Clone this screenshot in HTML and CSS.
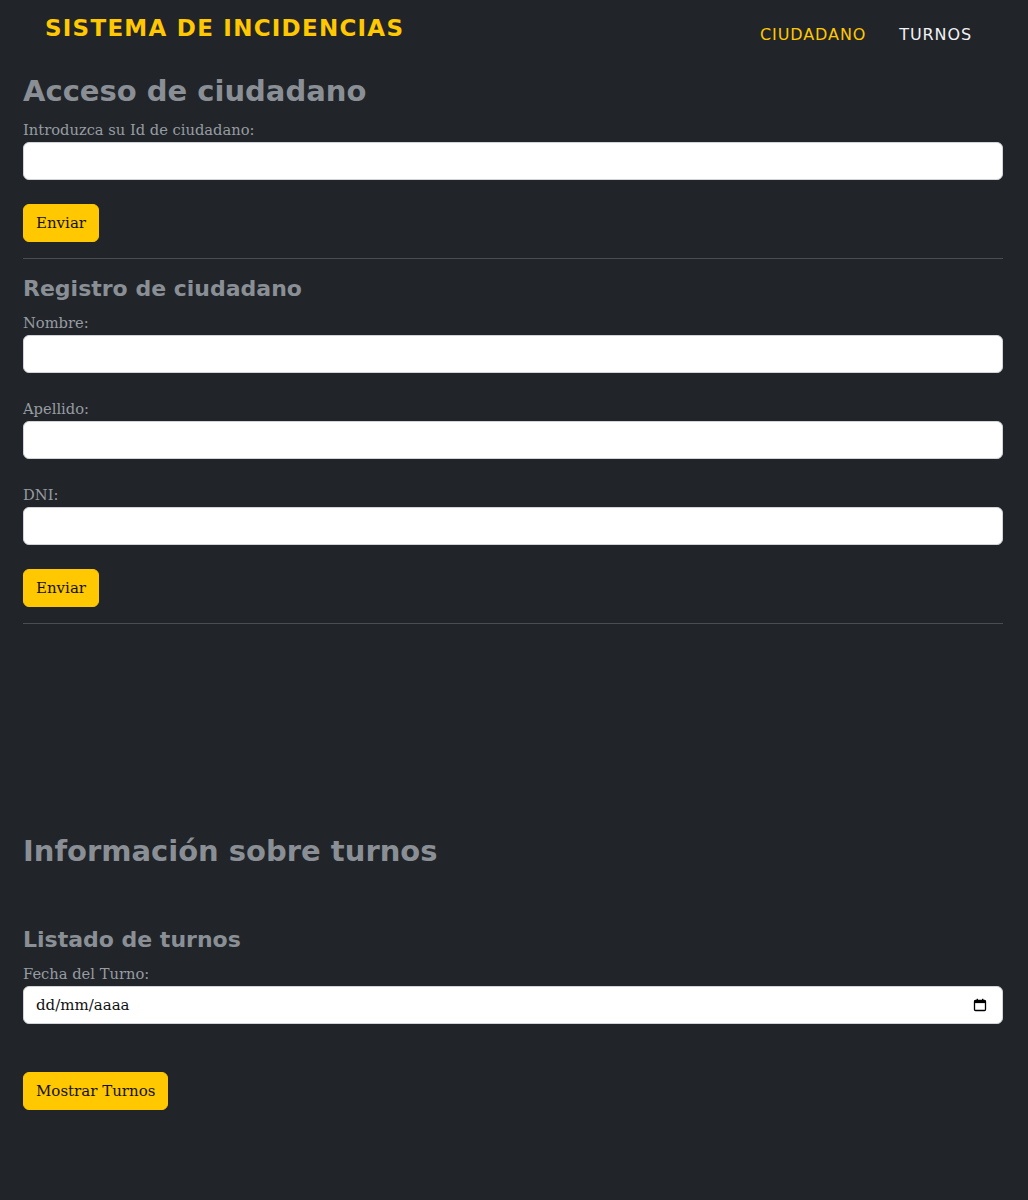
FILE: index.html
```html
<!DOCTYPE html>
<html lang="es">
<head>
<meta charset="utf-8">
<title>Sistema de incidencias</title>
<link rel="stylesheet" href="styles.css">
</head>
<body>
<header class="navbar">
  <div class="brand">SISTEMA DE INCIDENCIAS</div>
  <nav class="nav">
    <a class="nav-link active" href="#">CIUDADANO</a>
    <a class="nav-link" href="#">TURNOS</a>
  </nav>
</header>
<main class="container">
  <section class="block">
    <h2 class="h2 first">Acceso de ciudadano</h2>
    <label class="label">Introduzca su Id de ciudadano:</label>
    <input class="field" type="text">
    <button class="btn">Enviar</button>
    <hr class="rule">
  </section>
  <section class="block">
    <h4 class="h4">Registro de ciudadano</h4>
    <label class="label">Nombre:</label>
    <input class="field" type="text">
    <label class="label">Apellido:</label>
    <input class="field" type="text">
    <label class="label">DNI:</label>
    <input class="field" type="text">
    <button class="btn">Enviar</button>
    <hr class="rule">
  </section>
  <section class="block turnos">
    <h2 class="h2">Información sobre turnos</h2>
    <h4 class="h4 listado">Listado de turnos</h4>
    <label class="label">Fecha del Turno:</label>
    <div class="field date">
      <span class="date-text">dd/mm/aaaa</span>
      <svg class="cal" width="14" height="14" viewBox="0 0 14 14" aria-hidden="true">
        <rect x="1.5" y="2.5" width="11" height="10" rx="1" fill="none" stroke="#000" stroke-width="1.3"/>
        <rect x="1.5" y="2.5" width="11" height="2.6" fill="#000"/>
        <rect x="3.6" y="0.8" width="1.4" height="2.4" fill="#000"/>
        <rect x="9" y="0.8" width="1.4" height="2.4" fill="#000"/>
      </svg>
    </div>
    <button class="btn btn-show">Mostrar Turnos</button>
  </section>
</main>
</body>
</html>
```
FILE: styles.css
```css
html, body {
  margin: 0;
  padding: 0;
}
body {
  background: #212529;
  min-height: 1200px;
  font-family: "DejaVu Serif", "Liberation Serif", serif;
  font-size: 14.7px;
  color: #979ca3;
}
.navbar {
  display: flex;
  justify-content: space-between;
  align-items: flex-start;
  padding: 14px 56px 0 45px;
  height: 46px;
}
.brand {
  font-family: "DejaVu Sans", "Open Sans", sans-serif;
  font-weight: bold;
  font-size: 23px;
  letter-spacing: 1.25px;
  color: #ffc800;
  line-height: 28px;
}
.nav {
  display: flex;
  gap: 33px;
  padding-top: 11px;
}
.nav-link {
  font-family: "DejaVu Sans", "Open Sans", sans-serif;
  font-size: 16px;
  letter-spacing: 0.9px;
  color: #f1f3f5;
  text-decoration: none;
  line-height: 20px;
}
.nav-link.active {
  color: #ffc800;
}
.container {
  width: 980px;
  padding: 0 25px 0 23px;
}
.block {
  display: flex;
  flex-direction: column;
  align-items: flex-start;
}
.h2, .h4 {
  font-family: "DejaVu Sans", "Open Sans", sans-serif;
  font-weight: bold;
  color: #8a8f96;
  margin: 0;
  line-height: 1.2;
}
.h2 {
  font-size: 29px;
  margin-bottom: 10px;
}
.h2.first {
  margin-top: 14px;
  margin-bottom: 9px;
}
.h4 {
  font-size: 22px;
  margin-top: 17px;
  margin-bottom: 9px;
}
.label {
  line-height: 24px;
  display: block;
}
.field {
  box-sizing: border-box;
  width: 980px;
  height: 38px;
  border: 1px solid #ced4da;
  border-radius: 6px;
  background: #fff;
  margin: 0 0 24px 0;
  font-family: inherit;
  font-size: 15px;
  padding: 6px 12px;
}
.btn {
  font-family: inherit;
  font-size: 15px;
  color: #111;
  background: #ffc800;
  border: 1px solid #ffc800;
  border-radius: 6px;
  height: 38px;
  padding: 0 12px;
  cursor: pointer;
}
.rule {
  align-self: stretch;
  border: 0;
  border-top: 1px solid #4a4e54;
  margin: 16px 0 0 0;
}
.turnos {
  padding-top: 210px;
}
.listado {
  margin-top: 48px;
}
.date {
  display: flex;
  align-items: center;
  justify-content: space-between;
  color: #111;
  padding: 0 15px 0 12px;
  margin-bottom: 48px;
}
.date-text {
  line-height: 24px;
}
.cal {
  display: block;
}
```
